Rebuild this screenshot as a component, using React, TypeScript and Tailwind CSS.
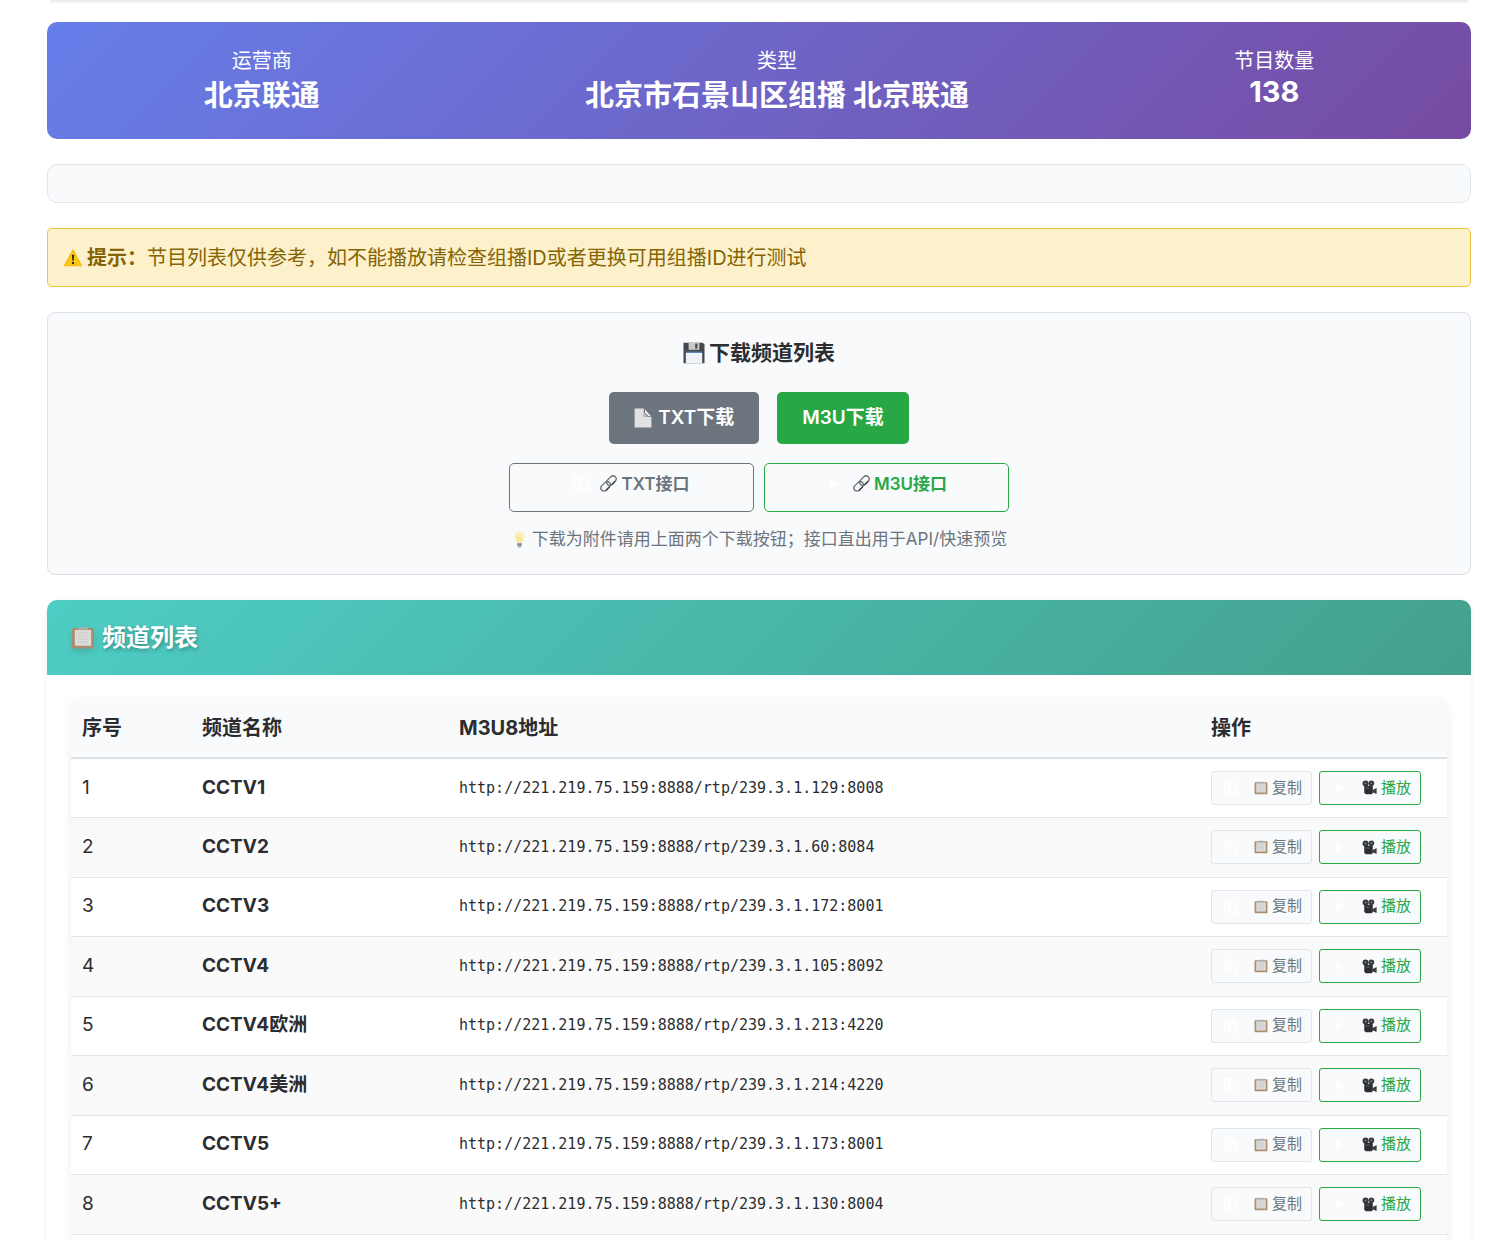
import type { ReactNode } from "react";

interface Channel {
  id: number;
  name: string;
  url: string;
}

const HOST = "http://221.219.75.159:8888/rtp/";

const channels: Channel[] = [
  { id: 1, name: "CCTV1", url: HOST + "239.3.1.129:8008" },
  { id: 2, name: "CCTV2", url: HOST + "239.3.1.60:8084" },
  { id: 3, name: "CCTV3", url: HOST + "239.3.1.172:8001" },
  { id: 4, name: "CCTV4", url: HOST + "239.3.1.105:8092" },
  { id: 5, name: "CCTV4欧洲", url: HOST + "239.3.1.213:4220" },
  { id: 6, name: "CCTV4美洲", url: HOST + "239.3.1.214:4220" },
  { id: 7, name: "CCTV5", url: HOST + "239.3.1.173:8001" },
  { id: 8, name: "CCTV5+", url: HOST + "239.3.1.130:8004" },
];

export default function App() {
  return (
    <div className="h-screen overflow-hidden bg-white font-['Inter','Noto_Sans_CJK_SC',sans-serif] text-[20px] text-[#2b2d30]">
      {/* Shadow of the bar above */}
      <div className="mr-8 ml-[50px] h-1 bg-gradient-to-b from-black/10 to-transparent" />

      <main className="mt-[18px] mr-[29px] ml-[47px] flex flex-col gap-[25px]">
        <section className="flex items-start justify-around rounded-[10px] bg-[linear-gradient(135deg,#667eea_0%,#764ba2_100%)] px-6 pt-[25px] pb-[23px] text-center text-white">
          <Stat label="运营商">
            <p className="text-[29px] leading-10 font-bold">北京联通</p>
          </Stat>
          <Stat label="类型">
            <p className="text-[29px] leading-10 font-bold">
              北京市石景山区组播 北京联通
            </p>
          </Stat>
          <Stat label="节目数量">
            <p className="text-[29px] leading-8 font-bold">138</p>
          </Stat>
        </section>

        <div className="h-[39px] rounded-[10px] border border-[#e1e6eb] bg-[#f8fafc]" />

        <div
          role="note"
          className="flex h-[59px] items-center rounded-[5px] border border-[#ecc341] bg-[#fdf1cb] px-[15px] text-[#856404]"
        >
          <WarningIcon className="h-5 w-5 shrink-0" />
          <p className="ml-1">
            <strong className="font-bold">提示：</strong>
            节目列表仅供参考，如不能播放请检查组播ID或者更换可用组播ID进行测试
          </p>
        </div>

        {/* Downloads */}
        <section className="flex flex-col items-center rounded-lg border border-[#dee2e6] bg-[#f8fafc] px-6 pt-[25px] pb-[21px]">
          <h2 className="flex items-center gap-1 text-[21px] leading-[30px] font-bold">
            <FloppyIcon className="h-[22px] w-[22px]" />
            下载频道列表
          </h2>
          <div className="mt-6 flex gap-[18px] text-[19px]">
            <button
              type="button"
              className="flex h-[52px] items-center gap-1.5 rounded-[5px] bg-[#6c757d] px-[25px] font-semibold text-white"
            >
              <PageIcon className="h-5 w-[18px]" />
              TXT下载
            </button>
            <button
              type="button"
              className="flex h-[52px] items-center rounded-[5px] bg-[#28a745] px-[25px] font-semibold text-white"
            >
              M3U下载
            </button>
          </div>
          <div className="mt-[19px] flex gap-2.5">
            <button
              type="button"
              className="flex h-[49px] w-[245px] items-start justify-center rounded-[5px] border border-[#6c757d] pt-[7px] text-[17px] leading-[26px] font-semibold text-[#6c757d]"
            >
              <CopyGhost className="mt-1 mr-2.5 h-[17px] w-[17px]" />
              <LinkIcon className="mt-1 mr-1 h-[17px] w-[17px]" />
              TXT接口
            </button>
            <button
              type="button"
              className="flex h-[49px] w-[245px] items-start justify-center rounded-[5px] border border-[#28a745] pt-[7px] text-[17px] leading-[26px] font-semibold text-[#28a745]"
            >
              <PlayGhost className="mt-1 mr-2.5 h-[17px] w-[17px]" />
              <LinkIcon className="mt-1 mr-1 h-[17px] w-[17px]" />
              M3U接口
            </button>
          </div>
          <p className="mt-[13px] flex items-center gap-1 text-[17px] leading-7 text-[#6c757d]">
            <BulbIcon className="h-[17px] w-[17px]" />
            下载为附件请用上面两个下载按钮；接口直出用于API/快速预览
          </p>
        </section>

        {/* Channel list */}
        <section className="rounded-[10px] shadow-[0_2px_6px_rgba(0,0,0,0.07)]">
          <h2 className="flex h-[75px] items-center gap-[7px] rounded-t-[10px] bg-[linear-gradient(135deg,#4ecdc4_0%,#44a08d_100%)] px-6 text-[24px] font-bold text-white [text-shadow:1px_2px_4px_rgba(0,0,0,0.3)]">
            <ClipboardIcon className="h-6 w-6 drop-shadow-md" />
            频道列表
          </h2>
          <div className="p-6">
            <div className="overflow-hidden rounded-[10px] pb-6 shadow-[0_2px_10px_rgba(0,0,0,0.08)]">
              <table className="w-full table-fixed border-collapse text-left text-[19px]">
                <thead className="bg-[#f8fafc] text-[20px]">
                  <tr className="h-[59px] border-b-2 border-[#dbe0e6]">
                    <th className="w-[120px] pl-[11px] font-bold">序号</th>
                    <th className="w-[257px] pl-[11px] font-bold">频道名称</th>
                    <th className="pl-[11px] font-bold">M3U8地址</th>
                    <th className="w-[247px] pl-[11px] font-bold">操作</th>
                  </tr>
                </thead>
                <tbody>
                  {channels.map((channel) => (
                    <ChannelRow key={channel.id} channel={channel} />
                  ))}
                </tbody>
              </table>
            </div>
          </div>
        </section>
      </main>
    </div>
  );
}

function Stat({ label, children }: { label: string; children: ReactNode }) {
  return (
    <div>
      <p className="leading-[29px]">{label}</p>
      {children}
    </div>
  );
}

function ChannelRow({ channel }: { channel: Channel }) {
  return (
    <tr className="h-[59px] border-b border-[#e3e6e9] bg-white even:h-[60px] even:bg-[#fafafa]">
      <td className="pl-[11px]">{channel.id}</td>
      <td className="pl-[11px] font-bold">{channel.name}</td>
      <td className="pl-[11px] font-['DejaVu_Sans_Mono',monospace] text-[15px]">
        {channel.url}
      </td>
      <td className="pl-[11px]">
        <div className="flex gap-[7px]">
          <button
            type="button"
            className="flex h-[34px] items-center rounded-[3px] border border-[#e1e6ec] bg-[#f8fafc] pr-[9px] pl-3 text-[15px] text-[#6c757d]"
          >
            <CopyGhost className="mr-[15px] h-[15px] w-[15px]" />
            <ClipboardIcon className="mr-1 h-[14px] w-[14px]" />
            复制
          </button>
          <button
            type="button"
            className="flex h-[34px] items-center rounded-[3px] border border-[#28a745] bg-[#f8fafc] pr-[9px] pl-3 text-[15px] text-[#28a745]"
          >
            <PlayGhost className="mr-[15px] h-[15px] w-[15px]" />
            <CameraIcon className="mr-1 h-[15px] w-[15px]" />
            播放
          </button>
        </div>
      </td>
    </tr>
  );
}

interface IconProps {
  className?: string;
}

function WarningIcon({ className }: IconProps) {
  return (
    <svg viewBox="0 0 20 20" className={className} aria-hidden="true">
      <path
        d="M10 2.2 18.4 17.6H1.6Z"
        fill="#fbc913"
        stroke="#f5bd14"
        strokeWidth="1.4"
        strokeLinejoin="round"
      />
      <path d="M8.9 6.8h2.2l-.4 6H9.3Z" fill="#2f2a1c" />
      <circle cx="10" cy="15" r="1.2" fill="#2f2a1c" />
    </svg>
  );
}

function FloppyIcon({ className }: IconProps) {
  return (
    <svg viewBox="0 0 22 22" className={className} aria-hidden="true">
      <path d="M0.5 0.8h19.3l1.7 1.7v18.7h-21Z" fill="#43474e" />
      <path d="M5.6 0.8h10.8v7H5.6Z" fill="#c9c8c4" />
      <path d="M12.2 1.6h2.2v5h-2.2Z" fill="#4d4d50" />
      <path d="M2.8 9.6h16.4v1.4H2.8Z" fill="#5e88bd" />
      <path d="M2.8 11h16.4v10.2H2.8Z" fill="#eef1f5" />
    </svg>
  );
}

function PageIcon({ className }: IconProps) {
  return (
    <svg viewBox="0 0 18 20" className={className} aria-hidden="true">
      <path d="M0.6 0.5h9.2v8.3h7.6v10.7H0.6Z" fill="#e2e1e1" />
      <path d="M11 1.6 16.8 8H14.6L11 4.4Z" fill="#f4f4f4" />
      <path d="M9.8 4 14.4 8.8H9.8Z" fill="#b4b6b9" />
    </svg>
  );
}

function LinkIcon({ className }: IconProps) {
  return (
    <svg
      viewBox="0 0 17 17"
      className={className}
      fill="none"
      aria-hidden="true"
    >
      <g transform="rotate(-45 8.5 8.5)">
        <rect x="-1" y="5.4" width="10.8" height="6.2" rx="3.1" stroke="#6b6e72" strokeWidth="1.3" />
        <rect x="7.2" y="5.4" width="10.8" height="6.2" rx="3.1" stroke="#6b6e72" strokeWidth="1.3" />
        <path d="M1.8 11.6h5.4M9.8 11.6H15" stroke="#3a3c40" strokeWidth="1.3" />
        <path d="M1.8 5.2h5.4M9.8 5.2H15" stroke="#a9acb0" strokeWidth="0.6" />
      </g>
    </svg>
  );
}

function BulbIcon({ className }: IconProps) {
  return (
    <svg viewBox="0 0 17 17" className={className} aria-hidden="true">
      <path
        d="M8.5 0.6a5.2 5.2 0 0 1 5.2 5.2c0 2.7-2.3 3.8-2.8 6.2H6.1c-.5-2.4-2.8-3.5-2.8-6.2A5.2 5.2 0 0 1 8.5.6Z"
        fill="#fbf0b4"
      />
      <path d="M7.2 11.6 6.6 6.6l1.9 1 1.9-1-.6 5" fill="none" stroke="#f3df7d" strokeWidth="0.9" />
      <path d="M6.3 12h4.4v3l-1.2 1.5h-2L6.3 15Z" fill="#a2a5a8" />
      <path d="M6.3 13.3h4.4" stroke="#74777a" strokeWidth="0.7" />
    </svg>
  );
}

function ClipboardIcon({ className }: IconProps) {
  return (
    <svg viewBox="0 0 24 24" className={className} aria-hidden="true">
      <rect x="1" y="2" width="22" height="20.5" rx="1.2" fill="#a88e6c" />
      <path d="M3.8 4h16.4v15.8H3.8Z" fill="#dcdbda" />
      <path d="M7 7h10M7 10h10M7 13h10M7 16h10" stroke="#c9c8c8" strokeWidth="1" />
      <path d="M7.5 1.2h9l1 2.6h-11Z" fill="#a9b0b2" />
    </svg>
  );
}

function CameraIcon({ className }: IconProps) {
  return (
    <svg viewBox="0 0 16 16" className={className} aria-hidden="true">
      <circle cx="3.8" cy="3.6" r="3.2" fill="#35373a" />
      <circle cx="10" cy="3.4" r="3" fill="#35373a" />
      <path d="M2.4 6h8.4l.7 1.2v6.6l-1.2 1.4H4L2.4 13.6Z" fill="#2c2e31" />
      <path d="M11 10.8 15.6 8.6v6.2L11 13Z" fill="#3a3c3f" />
      <circle cx="3.8" cy="3.6" r="1" fill="#85888b" />
      <circle cx="10" cy="3.4" r="1" fill="#85888b" />
      <path d="M4 8.6h4" stroke="#6c6f72" strokeWidth="0.9" />
    </svg>
  );
}

// White glyphs that barely show on the pale buttons
function CopyGhost({ className }: IconProps) {
  return (
    <svg
      viewBox="0 0 17 17"
      className={className}
      fill="none"
      stroke="#ffffff"
      strokeWidth="1.8"
      aria-hidden="true"
    >
      <path d="M1.5 1.5h8v3h-4v9h-4Z" />
      <path d="M6.5 5.5h8v10h-8Z" />
    </svg>
  );
}

function PlayGhost({ className }: IconProps) {
  return (
    <svg viewBox="0 0 17 17" className={className} aria-hidden="true">
      <path d="M4.5 3.5 13 8.5 4.5 13.5Z" fill="#ffffff" />
    </svg>
  );
}
